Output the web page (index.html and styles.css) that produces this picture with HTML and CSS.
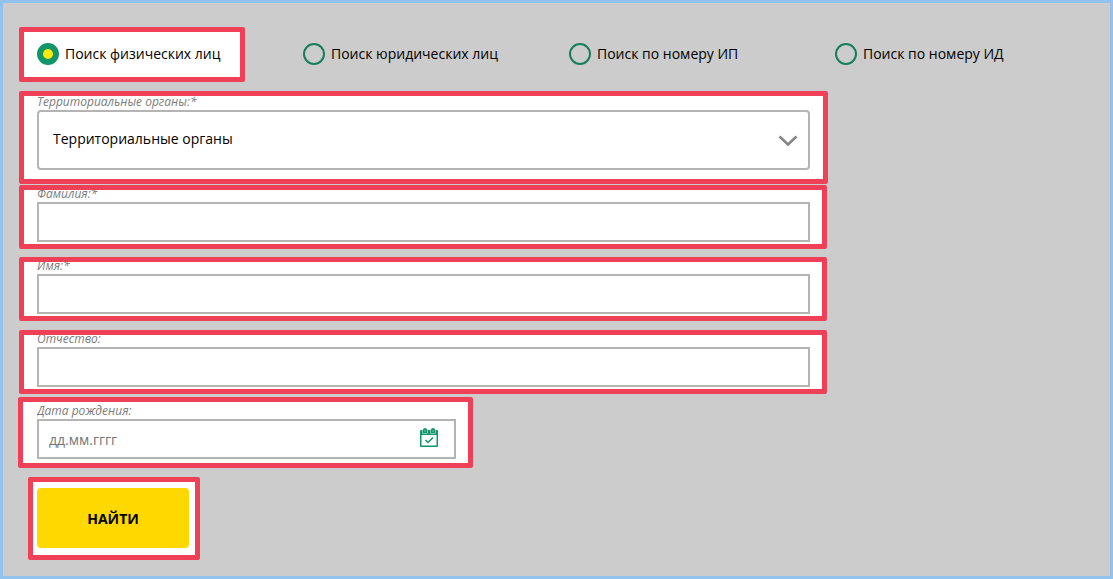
FILE: index.html
```html
<!DOCTYPE html>
<html lang="ru">
<head>
<meta charset="utf-8">
<meta name="viewport" content="width=device-width, initial-scale=1">
<title>Поиск</title>
<link rel="stylesheet" href="styles.css">
</head>
<body>
<form class="search">
  <div class="modes" role="radiogroup" aria-label="Вид поиска">
    <label class="mode mark"><input class="radio" type="radio" name="mode" checked><span>Поиск физических лиц</span></label>
    <label class="mode"><input class="radio" type="radio" name="mode"><span>Поиск юридических лиц</span></label>
    <label class="mode"><input class="radio" type="radio" name="mode"><span>Поиск по номеру ИП</span></label>
    <label class="mode"><input class="radio" type="radio" name="mode"><span>Поиск по номеру ИД</span></label>
  </div>

  <div class="field field-region mark">
    <label class="caption" for="region"><span>Территориальные органы:*</span></label>
    <div class="control">
      <select class="select" id="region"><option>Территориальные органы</option></select>
      <svg class="chevron" viewBox="0 0 20 12" aria-hidden="true"><path d="M1.5 1.500 10 9.500 18.500 1.500" fill="none" stroke="#848484" stroke-width="2.500"/></svg>
    </div>
  </div>

  <div class="field field-surname mark">
    <label class="caption" for="surname"><span>Фамилия:*</span></label>
    <input class="input" id="surname" type="text">
  </div>
  <div class="field field-name mark">
    <label class="caption" for="name"><span>Имя:*</span></label>
    <input class="input" id="name" type="text">
  </div>
  <div class="field field-patronymic mark">
    <label class="caption" for="patronymic"><span>Отчество:</span></label>
    <input class="input" id="patronymic" type="text">
  </div>

  <div class="field field-date mark">
    <label class="caption" for="birth"><span>Дата рождения:</span></label>
    <div class="control">
      <input class="input" id="birth" type="text" placeholder="дд.мм.гггг">
      <svg class="calendar" viewBox="0 0 18 19" aria-hidden="true">
        <path fill="#11966a" fill-rule="evenodd" d="M1 2H2.500V5.500H7.500V2H10.500V5.500H15.500V2H17Q18 2 18 3V18Q18 19 17 19H1Q0 19 0 18V3Q0 2 1 2ZM1.500 7V17.500H16.500V7Z"/>
        <path fill="#11966a" d="M3 1.500Q3 0 5 0T7 1.500V5H3ZM11 1.500Q11 0 13 0T15 1.500V5H11Z"/>
        <path d="M5 2V4M13 2V4" stroke="#79bea5"/>
        <path d="M5.500 12 8 14.500 13 9.500" fill="none" stroke="#11966a" stroke-width="1.500"/>
      </svg>
    </div>
  </div>

  <div class="action mark"><button class="submit" type="submit">НАЙТИ</button></div>
</form>
</body>
</html>
```
FILE: styles.css
```css
* {
  box-sizing: border-box;
}

body {
  margin: 0;
  font: 14px/20px "Open Sans", "Noto Sans", sans-serif;
  color: #000;
}

.search {
  display: flex;
  flex-direction: column;
  min-height: 100vh;
  padding: 24px 27px 16px 16px;
  border: 3px solid #92c3ee;
  background: #ccc;
}

/* Highlight frame */
.mark {
  border: 5px solid #ef4058;
  border-radius: 2px;
  background: #fff;
}

.modes {
  display: grid;
  grid-template-columns: repeat(4, 1fr);
  justify-items: start;
}

.mode {
  display: flex;
  align-items: center;
  gap: 6px;
  height: 55px;
  padding: 0 18px 2px;
}

.mode.mark {
  padding: 0 19px 2px 13px;
}

.radio {
  appearance: none;
  flex: none;
  width: 22px;
  height: 22px;
  margin: 0;
  border: 2px solid #167f5b;
  border-radius: 50%;
}

.radio:checked {
  border: 6px solid #11966a;
  background: #ffe900;
}

.field {
  width: 100%;
  max-width: 808px;
  padding: 0 12px 2px 13px;
}

.caption {
  display: flex;
  align-items: flex-end;
  height: 12px;
  overflow: hidden;
  font-size: 12px;
  line-height: 16px;
  font-style: italic;
  color: #7c7c7c;
}

.control {
  position: relative;
}

.input,
.select {
  display: block;
  width: 100%;
  height: 40px;
  padding: 0 10px;
  border: 2px solid #b4b4b4;
  border-radius: 0;
  background: #fff;
  color: #000;
  font: inherit;
}

.input::placeholder {
  color: #757575;
  opacity: 1;
}

.select {
  appearance: none;
  height: 60px;
  padding: 0 40px 2px 14px;
  border-radius: 4px;
}

.field-region {
  max-width: 809px;
  margin-top: 9px;
  padding: 0 13px 9px;
}

.field-region .caption {
  height: 14px;
}

.field-surname {
  margin-top: 1px;
}

.field-name {
  margin-top: 8px;
}

.field-patronymic {
  margin-top: 9px;
}

.field-date {
  max-width: 455px;
  margin: 3px 0 0 -1px;
  padding: 0 12px 4px 14px;
}

.field-date .caption {
  height: 17px;
}

.chevron {
  position: absolute;
  top: 25px;
  right: 12px;
  width: 20px;
  height: 12px;
  pointer-events: none;
}

.calendar {
  position: absolute;
  top: 9px;
  right: 18px;
  width: 18px;
  height: 19px;
  pointer-events: none;
}

.action {
  align-self: flex-start;
  margin: 9px 0 0 9px;
  padding: 6px 6px 7px 4px;
}

.submit {
  display: block;
  width: 152px;
  height: 60px;
  padding: 2px 0 0;
  border: 0;
  border-radius: 4px;
  background: #ffd800;
  color: #000;
  font: inherit;
  font-weight: 700;
}
```
